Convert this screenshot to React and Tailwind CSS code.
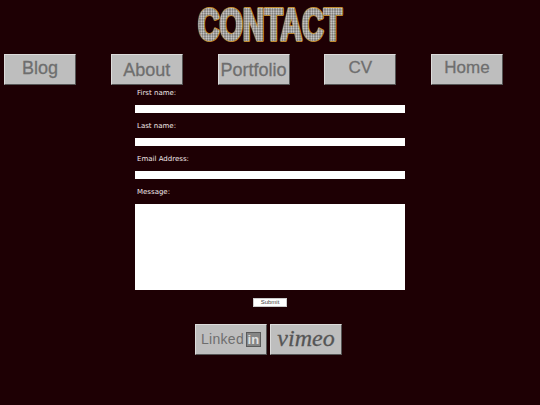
const nav = [
  ["Blog", "pb-[3px] text-[18px]"],
  ["About", "pt-[1px] text-[18px]"],
  ["Portfolio", "pt-[1px] text-[18px]"],
  ["CV", "pb-[3px] text-[17px]"],
  ["Home", "pb-[3px] text-[17px]"],
];

const bevel = "flex w-[72px] h-[31px] items-center justify-center bg-[#bebebe] border border-t-[#dcdcdc] border-l-[#dcdcdc] border-b-[#555555] border-r-[#555555] font-['Liberation_Sans',sans-serif]";
const navText = "text-[#6e6e6e] [-webkit-text-stroke:0.3px_#6e6e6e]";
const labelCls = "h-[13px] pl-[2px] text-[7px] leading-[13px] text-[#f0e8e8] font-['DejaVu_Sans',sans-serif]";

function Field({ label }) {
  return (
    <div className="flex flex-col">
      <label className={labelCls}>{label}</label>
      <input className="mt-[5px] block h-[8px] w-[270px] bg-white" />
    </div>
  );
}

function Title() {
  return (
    <svg width="150" height="40" viewBox="0 0 150 40" role="img" aria-label="CONTACT">
      <defs>
        <pattern id="dots" width="2.5" height="2.5" patternUnits="userSpaceOnUse">
          <rect width="2.5" height="2.5" fill="#6d6a66" />
          <circle cx="1.25" cy="1.25" r="0.95" fill="#e0e0e0" />
        </pattern>
        <text id="t" x="3" y="35" textLength="144" lengthAdjust="spacingAndGlyphs" fontFamily="'Liberation Sans',sans-serif" fontWeight="700" fontSize="45">CONTACT</text>
      </defs>
      <use href="#t" fill="#c08c32" stroke="#c08c32" strokeWidth="4" strokeLinejoin="round" />
      <use href="#t" fill="url(#dots)" stroke="url(#dots)" strokeWidth="2" />
    </svg>
  );
}

export default function App() {
  return (
    <div className="h-[405px] w-[540px] overflow-hidden bg-[#1e0004]">
      <div className="flex h-[54px] items-start justify-center pt-[5px]">
        <Title />
      </div>
      <nav className="ml-[4px] flex w-[499px] justify-between">
        {nav.map(([t, s]) => (
          <a key={t} className={`${bevel} ${navText} ${s}`}>{t}</a>
        ))}
      </nav>
      <form className="mx-auto mt-[2px] flex w-[270px] flex-col">
        <Field label="First name:" />
        <div className="mt-[7px]"><Field label="Last name:" /></div>
        <div className="mt-[7px]"><Field label="Email Address:" /></div>
        <div className="mt-[7px] flex flex-col">
          <label className={labelCls}>Message:</label>
          <textarea className="mt-[5px] block h-[86px] w-[270px] resize-none bg-white" />
        </div>
        <button type="button" className="mx-auto mt-[8px] h-[9px] w-[34px] border border-[#cccccc] bg-white text-[6px] leading-[7px] font-normal text-[#444444] font-['Liberation_Sans',sans-serif]">Submit</button>
      </form>
      <div className="mt-[17px] flex justify-center gap-[3px] pr-[3px]">
        <a className={`${bevel} gap-[2px] text-[14px] tracking-[0.3px] text-[#6e6e6e]`}>
          Linked
          <span className="flex h-[15px] w-[15px] items-center justify-center border border-[#5a5a5a] bg-[#858585] text-[13px] leading-[13px] font-bold text-[#e0e0e0]">in</span>
        </a>
        <a className={`${bevel} pb-[3px] font-['Liberation_Serif',serif]! text-[24px] text-[#555555] italic [-webkit-text-stroke:0.3px_#555555]`}>vimeo</a>
      </div>
    </div>
  );
}
